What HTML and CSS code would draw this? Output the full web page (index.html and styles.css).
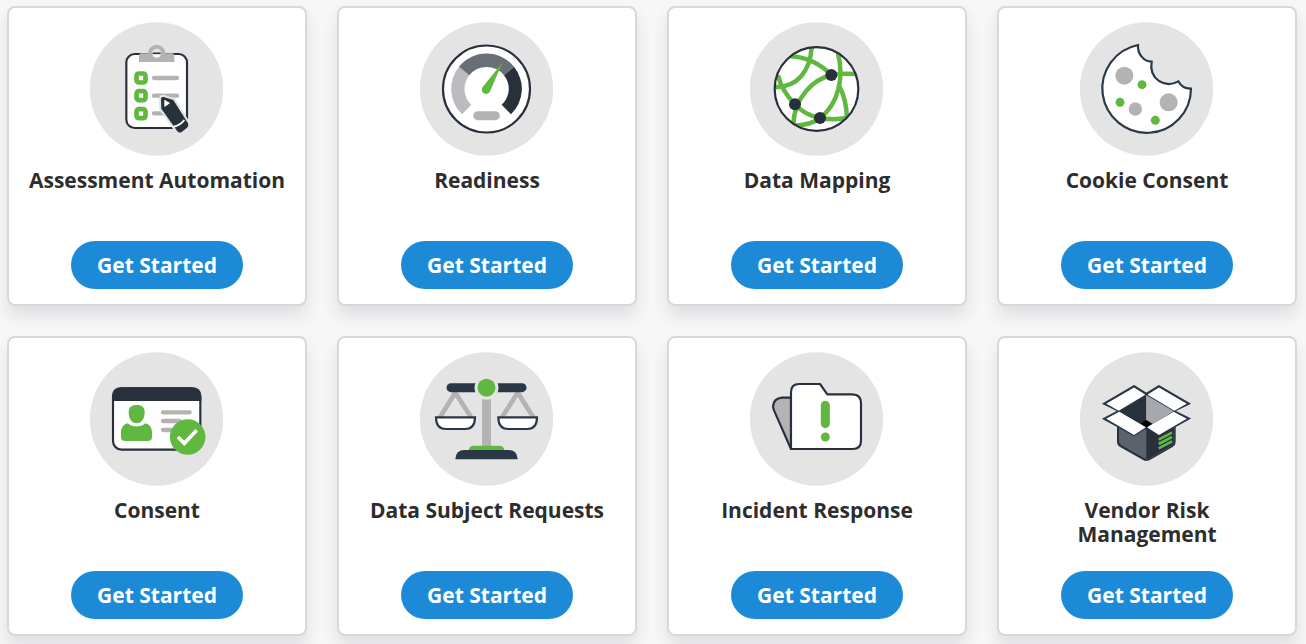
FILE: index.html
```html
<!DOCTYPE html>
<html lang="en">
<head>
<meta charset="utf-8">
<meta name="viewport" content="width=device-width, initial-scale=1">
<title>Get Started</title>
<link rel="stylesheet" href="styles.css">
</head>
<body>
<main class="modules">
  <article class="card">
    <svg class="card-icon" viewBox="12 12 402 402" aria-hidden="true">
      <circle class="disc" cx="211.500" cy="213" r="200"/>
      <rect x="121" y="108" width="182" height="222" rx="25" fill="#fff" stroke="#28303c" stroke-width="6.500"/>
      <path d="M159 132V112Q159 106 166 106H186A26 26 0 0 1 238 106H258Q265 106 265 112V132Z" fill="#b3b3b3"/>
      <circle cx="212" cy="106" r="13" fill="#fff"/>
      <path d="M199 105A13 13 0 0 1 225 105Z" fill="#e4e4e4"/>
      <path d="M200 106H224" stroke="#28303c" stroke-width="5"/>
      <g fill="#fff" stroke="#61b840" stroke-width="14">
        <rect x="151.500" y="166.500" width="27" height="27" rx="7"/>
        <rect x="151.500" y="219.500" width="27" height="27" rx="7"/>
        <rect x="151.500" y="273.500" width="27" height="27" rx="7"/>
      </g>
      <path d="M204 180H273M204 233H273M204 286H250" stroke="#b3b3b3" stroke-width="13" stroke-linecap="round"/>
      <path d="M225 243Q225 236 233 237L262 246L306 316Q309 324 303 329L288 341Q280 347 274 340L226 272Z" fill="#28303c" stroke="#e4e4e4" stroke-width="13" stroke-linejoin="round"/>
      <path d="M225 243Q225 236 233 237L262 246L306 316Q309 324 303 329L288 341Q280 347 274 340L226 272Z" fill="#28303c"/>
      <path d="M235 245L252 255Q244 262 235 267Z" fill="#fff"/>
      <path d="M263 326Q283 322 295 306" fill="none" stroke="#fff" stroke-width="6"/>
    </svg>
    <h2 class="card-title">Assessment Automation</h2>
    <button class="card-button" type="button">Get Started</button>
  </article>

  <article class="card">
    <svg class="card-icon" viewBox="12 12 402 402" aria-hidden="true">
      <circle class="disc" cx="211.500" cy="213" r="200"/>
      <circle cx="211.500" cy="213" r="130.500" fill="#fff" stroke="#28303c" stroke-width="6.500"/>
      <path d="M129 146A106 106 0 0 0 138 289L166 260A64 64 0 0 1 160 172Z" fill="#bbbcc1"/>
      <path d="M129 146A106 106 0 0 1 294 146L264 172A66 66 0 0 0 160 172Z" fill="#696f77"/>
      <path d="M294 146A106 106 0 0 1 285 289L257 260A64 64 0 0 0 264 172Z" fill="#28303c"/>
      <path d="M260 133L223 218A13 13 0 1 1 200 207Z" fill="#61b840"/>
      <path d="M185 293H238" stroke="#b3b3b3" stroke-width="27" stroke-linecap="round"/>
    </svg>
    <h2 class="card-title">Readiness</h2>
    <button class="card-button" type="button">Get Started</button>
  </article>

  <article class="card">
    <svg class="card-icon" viewBox="12 12 402 402" aria-hidden="true">
      <defs><clipPath id="globe"><circle cx="211.500" cy="213" r="124"/></clipPath></defs>
      <circle class="disc" cx="211.500" cy="213" r="200"/>
      <circle cx="211.500" cy="213" r="125" fill="#fff"/>
      <g clip-path="url(#globe)" fill="none" stroke="#61b840" stroke-width="13.500">
        <path d="M197 88C192 158 157 207 86 208"/>
        <path d="M134 115C188 118 226 141 256 171"/>
        <path d="M256 171Q281 165 336 168"/>
        <path d="M276 106C294 176 279 257 222 300C202 317 176 322 140 323"/>
        <path d="M256 171C201 184 145 240 142 318"/>
        <path d="M96 172C104 207 123 235 147 259C168 282 195 296 222 300Q259 307 303 300"/>
        <path d="M280 205Q302 244 303 306"/>
      </g>
      <circle cx="211.500" cy="213" r="125.500" fill="none" stroke="#28303c" stroke-width="6.500"/>
      <g fill="#28303c"><circle cx="256" cy="171" r="18"/><circle cx="147" cy="259" r="18"/><circle cx="222" cy="300" r="18"/></g>
    </svg>
    <h2 class="card-title">Data Mapping</h2>
    <button class="card-button" type="button">Get Started</button>
  </article>

  <article class="card">
    <svg class="card-icon" viewBox="12 12 402 402" aria-hidden="true">
      <circle class="disc" cx="211.500" cy="213" r="200"/>
      <path d="M186 81A133 133 0 1 0 345 212Q319 213 307 190C267 212 218 184 227 131C203 130 184 108 186 81Z" fill="#fff" stroke="#2a3747" stroke-width="6.500"/>
      <g fill="#b3b3b3"><circle cx="145" cy="173" r="27"/><circle cx="278" cy="253" r="27"/><circle cx="178" cy="273" r="20"/></g>
      <g fill="#61b840"><circle cx="198" cy="200" r="13.500"/><circle cx="132" cy="253" r="13.500"/><circle cx="238" cy="307" r="13.500"/></g>
    </svg>
    <h2 class="card-title">Cookie Consent</h2>
    <button class="card-button" type="button">Get Started</button>
  </article>

  <article class="card">
    <svg class="card-icon" viewBox="12 12 402 402" aria-hidden="true">
      <circle class="disc" cx="211.500" cy="213" r="200"/>
      <rect x="81" y="121" width="262" height="184" rx="26" fill="#fff" stroke="#28303c" stroke-width="6.500"/>
      <path d="M78 159V145Q78 118 106 118H318Q346 118 346 145V159Z" fill="#28303c"/>
      <path d="M152 171C168 171 176 177 176 193C176 212 167 226 152 226C137 226 128 212 128 193C128 177 136 171 152 171Z" fill="#61b840"/>
      <path d="M125 226C140 239 163 239 178 226C192 230 198 240 198 254V266Q198 279 185 279H118Q105 279 105 266V254C105 240 111 230 125 226Z" fill="#61b840"/>
      <path d="M231 193H311M231 219H280M231 246H260" stroke="#b3b3b3" stroke-width="13" stroke-linecap="round"/>
      <circle cx="305" cy="267" r="53.500" fill="#61b840"/>
      <path d="M276 267L295 286L332 247" fill="none" stroke="#fff" stroke-width="11"/>
    </svg>
    <h2 class="card-title">Consent</h2>
    <button class="card-button" type="button">Get Started</button>
  </article>

  <article class="card">
    <svg class="card-icon" viewBox="12 12 402 402" aria-hidden="true">
      <circle class="disc" cx="211.500" cy="213" r="200"/>
      <path d="M72 208L118 134L165 208M258 208L305 134L352 208" fill="none" stroke="#b3b3b3" stroke-width="14"/>
      <path d="M105 119H318" stroke="#2a3747" stroke-width="27" stroke-linecap="round"/>
      <path d="M198 148H225V294H198Z" fill="#b3b3b3"/>
      <circle cx="211.500" cy="119" r="36" fill="#e4e4e4"/>
      <circle cx="211.500" cy="119" r="27" fill="#61b840"/>
      <path d="M60 208H177C177 231 167 243 148 243H89C70 243 60 231 60 208ZM247 208H363C363 231 353 243 334 243H276C257 243 247 231 247 208Z" fill="#fff" stroke="#2a3747" stroke-width="6.500"/>
      <path d="M158 308Q159 293 173 293H250Q264 293 265 308Z" fill="#61b840"/>
      <path d="M118 334Q119 306 146 306H277Q304 306 305 334Z" fill="#2a3747"/>
    </svg>
    <h2 class="card-title">Data Subject Requests</h2>
    <button class="card-button" type="button">Get Started</button>
  </article>

  <article class="card">
    <svg class="card-icon" viewBox="12 12 402 402" aria-hidden="true">
      <circle class="disc" cx="211.500" cy="213" r="200"/>
      <g stroke="#28303c" stroke-width="6.500" stroke-linejoin="round">
        <path d="M135 149H108Q83 151 81 175Q82 182 84 187L135 303Z" fill="#b3b3b3"/>
        <path d="M135 303V133Q135 108 160 108H222L244 139H319Q345 140 345 165V278Q345 303 320 303Z" fill="#fff"/>
      </g>
      <path d="M238 172V227" stroke="#61b840" stroke-width="27" stroke-linecap="round"/>
      <circle cx="238" cy="267" r="13.500" fill="#61b840"/>
    </svg>
    <h2 class="card-title">Incident Response</h2>
    <button class="card-button" type="button">Get Started</button>
  </article>

  <article class="card">
    <svg class="card-icon" viewBox="12 12 402 402" aria-hidden="true">
      <circle class="disc" cx="211.500" cy="213" r="200"/>
      <path d="M123 225V282Q123 291 131 296L200 335Q211 342 223 335L291 296Q299 291 299 282V225Z" fill="#28303c"/>
      <path d="M129 225V281Q129 287 135 291L203 330Q207 332 211 332V225Z" fill="#5c626c"/>
      <path d="M211 335Q216 335 220 332L289 292Q294 288 294 282V228" fill="none" stroke="#596270" stroke-width="1.500"/>
      <path d="M211 141L130 190L211 239Z" fill="#28303c"/>
      <path d="M211 141L293 190L211 239Z" fill="#a6a8ad"/>
      <path d="M211 216L230 228L211 241L193 228Z" fill="#000"/>
      <g fill="#fff" stroke="#2a3747" stroke-width="7">
        <path d="M174 115L211 138L128 188L85 167Z"/>
        <path d="M249 115L211 138L294 188L338 167Z"/>
        <path d="M128 190L211 238L174 261L85 212Z"/>
        <path d="M294 190L211 238L249 261L338 212Z"/>
      </g>
      <path d="M211 142L130 190L211 239Z" fill="#28303c"/>
      <path d="M211 142L293 190L211 239Z" fill="#a6a8ad"/>
      <path d="M211 216L230 228L211 241L193 228Z" fill="#000"/>
      <path d="M174 119L208 140L128 188L91 167ZM249 119L215 140L295 188L332 167ZM130 191L210 238L174 261L91 212ZM293 191L213 238L249 261L332 212Z" fill="#fff"/>
      <path d="M248 275L288 254M248 288L288 267M248 301L288 280" stroke="#61b840" stroke-width="8"/>
    </svg>
    <h2 class="card-title">Vendor Risk Management</h2>
    <button class="card-button" type="button">Get Started</button>
  </article>
</main>
</body>
</html>
```

FILE: styles.css
```css
* { box-sizing: border-box; }

body {
  margin: 0;
  background: #f7f7f7;
  color: #2d2d2d;
  font-family: "Open Sans", "Noto Sans", sans-serif;
}

.modules {
  display: grid;
  grid-template-columns: repeat(4, 1fr);
  gap: 30px;
  padding: 6px 9px 8px 7px;
}

.card {
  display: flex;
  flex-direction: column;
  align-items: center;
  min-height: 300px;
  padding: 14px 15px 15px;
  border: 2px solid #d8d8d8;
  border-radius: 8px;
  background: #fff;
  box-shadow: 0 10px 16px rgba(60, 60, 90, 0.12);
}

.card-icon {
  display: block;
  width: 134px;
  height: 134px;
}

.disc { fill: #e4e4e4; }

.card-title {
  margin: 12px 0 20px;
  font-size: 21px;
  line-height: 24px;
  font-weight: 700;
  text-align: center;
}

.card-button {
  margin-top: auto;
  height: 48px;
  padding: 0 26px;
  border: 0;
  border-radius: 24px;
  background: #1c8ad7;
  color: #fff;
  font: 700 21px/24px "Open Sans", "Noto Sans", sans-serif;
  cursor: pointer;
}

@media (max-width: 1100px) {
  .modules { grid-template-columns: repeat(auto-fit, minmax(290px, 1fr)); }
}
```
